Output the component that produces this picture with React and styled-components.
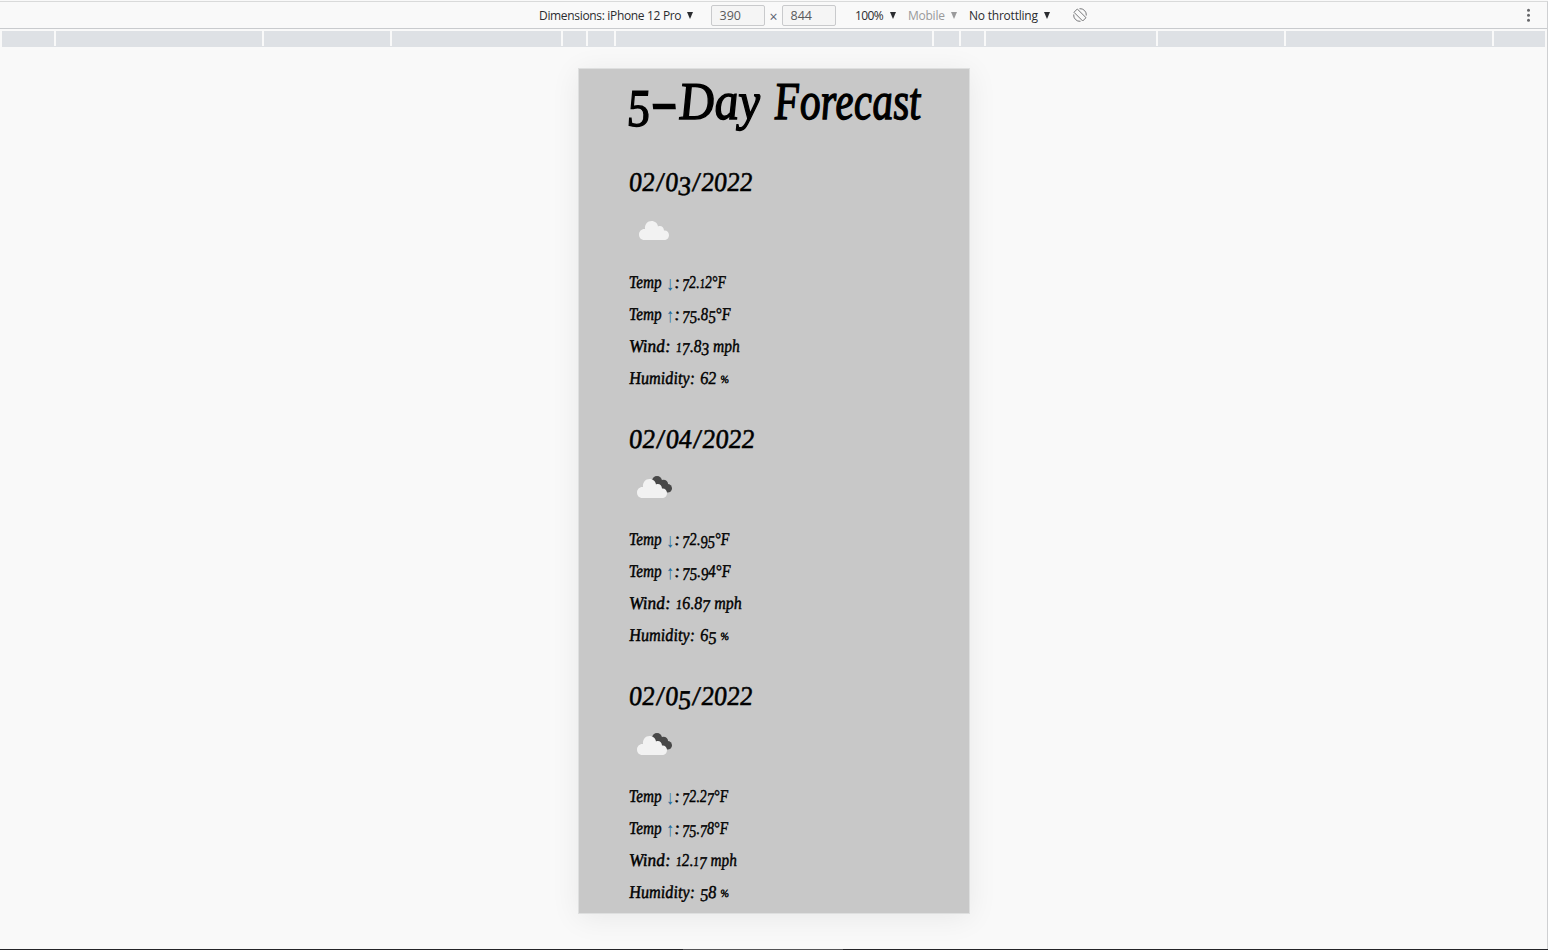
import React from "react";
import styled, { createGlobalStyle } from "styled-components";

const Global = createGlobalStyle`
  * { box-sizing: border-box; }
  body { margin: 0; background: #f9f9f9; overflow: hidden; }
`;

const Page = styled.div`
  width: 1548px;
  height: 950px;
  padding-top: 1px;
  display: flex;
  flex-direction: column;
  background: #f9f9f9;
`;
const Pane = styled.div`
  flex: 1;
  display: flex;
  flex-direction: column;
  border-top: 1px solid #d9dada;
  border-right: 1px solid #cfd0d2;
`;
const Toolbar = styled.div`
  display: flex;
  align-items: center;
  height: 27px;
  padding: 0 14px 0 539px;
  border-bottom: 1px solid #c9cbce;
  font-family: "Open Sans", "Noto Sans", sans-serif;
  font-size: 12px;
  color: #2b2c2f;
`;
const Select = styled.div`
  display: flex;
  align-items: center;
  justify-content: space-between;
  flex: none;
  width: ${(p) => p.$width}px;
  margin-left: ${(p) => p.$before || 0}px;
  letter-spacing: ${(p) => p.$spacing || 0}px;
  white-space: nowrap;
  color: ${(p) => (p.$muted ? "#9a9a9b" : "#2b2c2f")};
`;
const Arrow = styled.i`
  border: solid transparent;
  border-width: 7px 3.5px 0;
  border-top-color: currentColor;
`;
const SizeField = styled.div`
  width: 54px;
  height: 21px;
  margin-left: ${(p) => p.$before || 0}px;
  padding-left: 7.5px;
  border: 1px solid #c9cacc;
  border-radius: 2px;
  background: #f5f5f5;
  color: #5a5a5c;
  font-size: 12.5px;
  line-height: 19px;
`;
const Times = styled.span`
  width: 17px;
  text-align: center;
  padding-top: 3px;
  color: #5a6270;
  font-size: 14px;
`;
const RotateIcon = styled.svg`
  margin-left: 23px;
`;
const Spacer = styled.div`
  flex: 1;
`;
const Ruler = styled.div`
  display: flex;
  gap: 2px;
  height: 16px;
  margin: 2px 2px 0;
  border-bottom: 1px solid #dee1e5;
`;
const Segment = styled.div`
  width: ${(p) => p.$width}px;
  flex: none;
  background: #dee1e5;
`;
const Stage = styled.div`
  display: flex;
  justify-content: center;
  padding-top: 21px;
  flex: 1;
`;
const Phone = styled.div`
  width: 392px;
  height: 846px;
  border: 1px solid #dedfdf;
  padding-left: 49px;
  background: #c8c8c8;
  background-clip: padding-box;
  box-shadow: 0 4px 28px rgba(0, 0, 0, 0.07);
  font-family: "Liberation Serif", serif;
  font-style: italic;
  color: #000;
  white-space: nowrap;
`;
/* Condensed italic text, straightened a little towards a chancery hand. */
const Script = styled.span`
  display: block;
  flex: none;
  width: ${(p) => p.$width}px;
  white-space: pre;
  transform: scaleX(${(p) => p.$scale || 1}) skewX(4deg);
  transform-origin: left center;
`;
const LowFigure = styled.span`
  vertical-align: -0.14em;
  line-height: 0;
`;
const SmallFigure = styled.span`
  font-size: 0.75em;
  line-height: 0;
`;
const Slash = styled.span`
  margin: 0 0.06em;
`;
const Title = styled.h1`
  display: flex;
  margin: 0;
  height: 97px;
  font-size: 53px;
  font-weight: 400;
  line-height: 64px;
  -webkit-text-stroke: 1.4px #000;
`;
const Day = styled.section`
  height: 257px;
  padding-left: 1px;
`;
const DateText = styled.h2`
  margin: 0 0 8px;
  font-size: 27px;
  font-weight: 400;
  line-height: 32px;
  -webkit-text-stroke: 0.6px #000;
`;
const IconBox = styled.div`
  height: 50px;
  margin-bottom: 10px;
`;
const Reading = styled.div`
  display: flex;
  height: 32px;
  line-height: 32px;
  font-size: 18px;
  -webkit-text-stroke: 0.45px #000;
`;
const Direction = styled.span`
  display: flex;
  justify-content: center;
  width: 8px;
  padding-top: 1px;
  font-size: 20px;
  font-style: normal;
  color: #206a9d;
  -webkit-text-stroke: 0;
  transform: scaleX(0.8);
`;
const Percent = styled.span`
  font-size: 11px;
  line-height: 0;
  vertical-align: 1px;
`;
const BottomEdge = styled.div`
  height: 1px;
  background: linear-gradient(90deg, #242428 683px, #535356 683px 843px, #242428 843px);
`;

const segments = [52, 206, 126, 169, 23, 26, 316, 25, 23, 170, 126, 206, 51];

const days = [
  { date: "02/03/2022", low: ["72.12°F", 0.78], high: ["75.85°F", 0.83], wind: ["17.83 mph", 0.865], humidity: "62" },
  { date: "02/04/2022", wide: true, dark: true, low: ["72.95°F", 0.81], high: ["75.94°F", 0.83], wind: ["16.87 mph", 0.89], humidity: "65" },
  { date: "02/05/2022", dark: true, low: ["72.27°F", 0.79], high: ["75.78°F", 0.79], wind: ["12.17 mph", 0.85], humidity: "58" },
];

function Figures({ text }) {
  return text.split(/([13579/])/).map((part, i) => {
    if (part === "/") return <Slash key={i}>{part}</Slash>;
    if (part === "1") return <SmallFigure key={i}>{part}</SmallFigure>;
    if (/^[3579]$/.test(part)) return <LowFigure key={i}>{part}</LowFigure>;
    return part;
  });
}

function Cloud({ dark }) {
  return (
    <svg width="50" height="50" viewBox="0 0 50 50">
      {dark && (
        <g fill="#484848">
          <circle cx="28" cy="18" r="5" />
          <circle cx="34.5" cy="21.3" r="4.6" />
          <circle cx="38.7" cy="25.3" r="4.3" />
          <path d="M26 19 L34 18 L39 29 L33 26 Z" />
        </g>
      )}
      <path
        transform={dark ? "translate(-2 1)" : undefined}
        fill="#f2f2f2"
        d="M15.5 34 C12 34 10 31.5 10 28.5 C10 25 13 22.5 16 23 C15.5 18.5 18.5 15 22.5 15 C26 15 28.5 17.3 29 20.5 C32 19 35 21.5 35 24.5 C37.5 24 40 26 40 29 C40 32 38 34 35 34 Z"
      />
    </svg>
  );
}

function Temperature({ arrow, value }) {
  return (
    <Reading>
      <Script $width={37} $scale={0.85}>Temp</Script>
      <Direction>{arrow}</Direction>
      <Script $width={8}>:</Script>
      <Script $scale={value[1]}><Figures text={value[0]} /></Script>
    </Reading>
  );
}

export default function App() {
  return (
    <Page>
      <Global />
      <Pane>
        <Toolbar>
          <Select $width={154} $spacing={-0.33}>Dimensions: iPhone 12 Pro<Arrow /></Select>
          <SizeField $before={18}>390</SizeField>
          <Times>×</Times>
          <SizeField>844</SizeField>
          <Select $width={41} $before={19} $spacing={-0.6}>100%<Arrow /></Select>
          <Select $width={49} $before={12} $spacing={-0.25} $muted>Mobile<Arrow /></Select>
          <Select $width={81} $before={12} $spacing={-0.22}>No throttling<Arrow /></Select>
          <RotateIcon width="14" height="14" viewBox="0 0 14 14" fill="none" stroke="#77787a">
            <path d="M4.3 1 L13 9.7 L9.7 13 L1 4.3 Z M6.5 0.7 A6.2 6.2 0 0 1 13.3 7.5 M0.7 6.5 A6.2 6.2 0 0 0 7.5 13.3" />
          </RotateIcon>
          <Spacer />
          <svg width="10" height="14" viewBox="0 0 10 14" fill="#66676a">
            <circle cx="5.5" cy="2.3" r="1.5" />
            <circle cx="5.5" cy="7.3" r="1.5" />
            <circle cx="5.5" cy="12.3" r="1.5" />
          </svg>
        </Toolbar>
        <Ruler>
          {segments.map((w, i) => <Segment key={i} $width={w} />)}
        </Ruler>
        <Stage>
          <Phone>
            <Title>
              <Script $width={24} $scale={0.86}><Figures text="5" /></Script>
              <Script $width={28} $scale={1.5}>-</Script>
              <Script $width={95} $scale={0.92}>Day </Script>
              <Script $scale={0.785}>Forecast</Script>
            </Title>
            {days.map((d) => (
              <Day key={d.date}>
                <DateText><Script $scale={d.wide ? 0.97 : 0.955}><Figures text={d.date} /></Script></DateText>
                <IconBox><Cloud dark={d.dark} /></IconBox>
                <Temperature arrow="↓" value={d.low} />
                <Temperature arrow="↑" value={d.high} />
                <Reading>
                  <Script $width={47} $scale={0.97}>Wind:</Script>
                  <Script $scale={d.wind[1]}><Figures text={d.wind[0]} /></Script>
                </Reading>
                <Reading>
                  <Script $width={71} $scale={0.905}>Humidity:</Script>
                  <Script $scale={0.91}><Figures text={d.humidity} /> <Percent>%</Percent></Script>
                </Reading>
              </Day>
            ))}
          </Phone>
        </Stage>
      </Pane>
      <BottomEdge />
    </Page>
  );
}
